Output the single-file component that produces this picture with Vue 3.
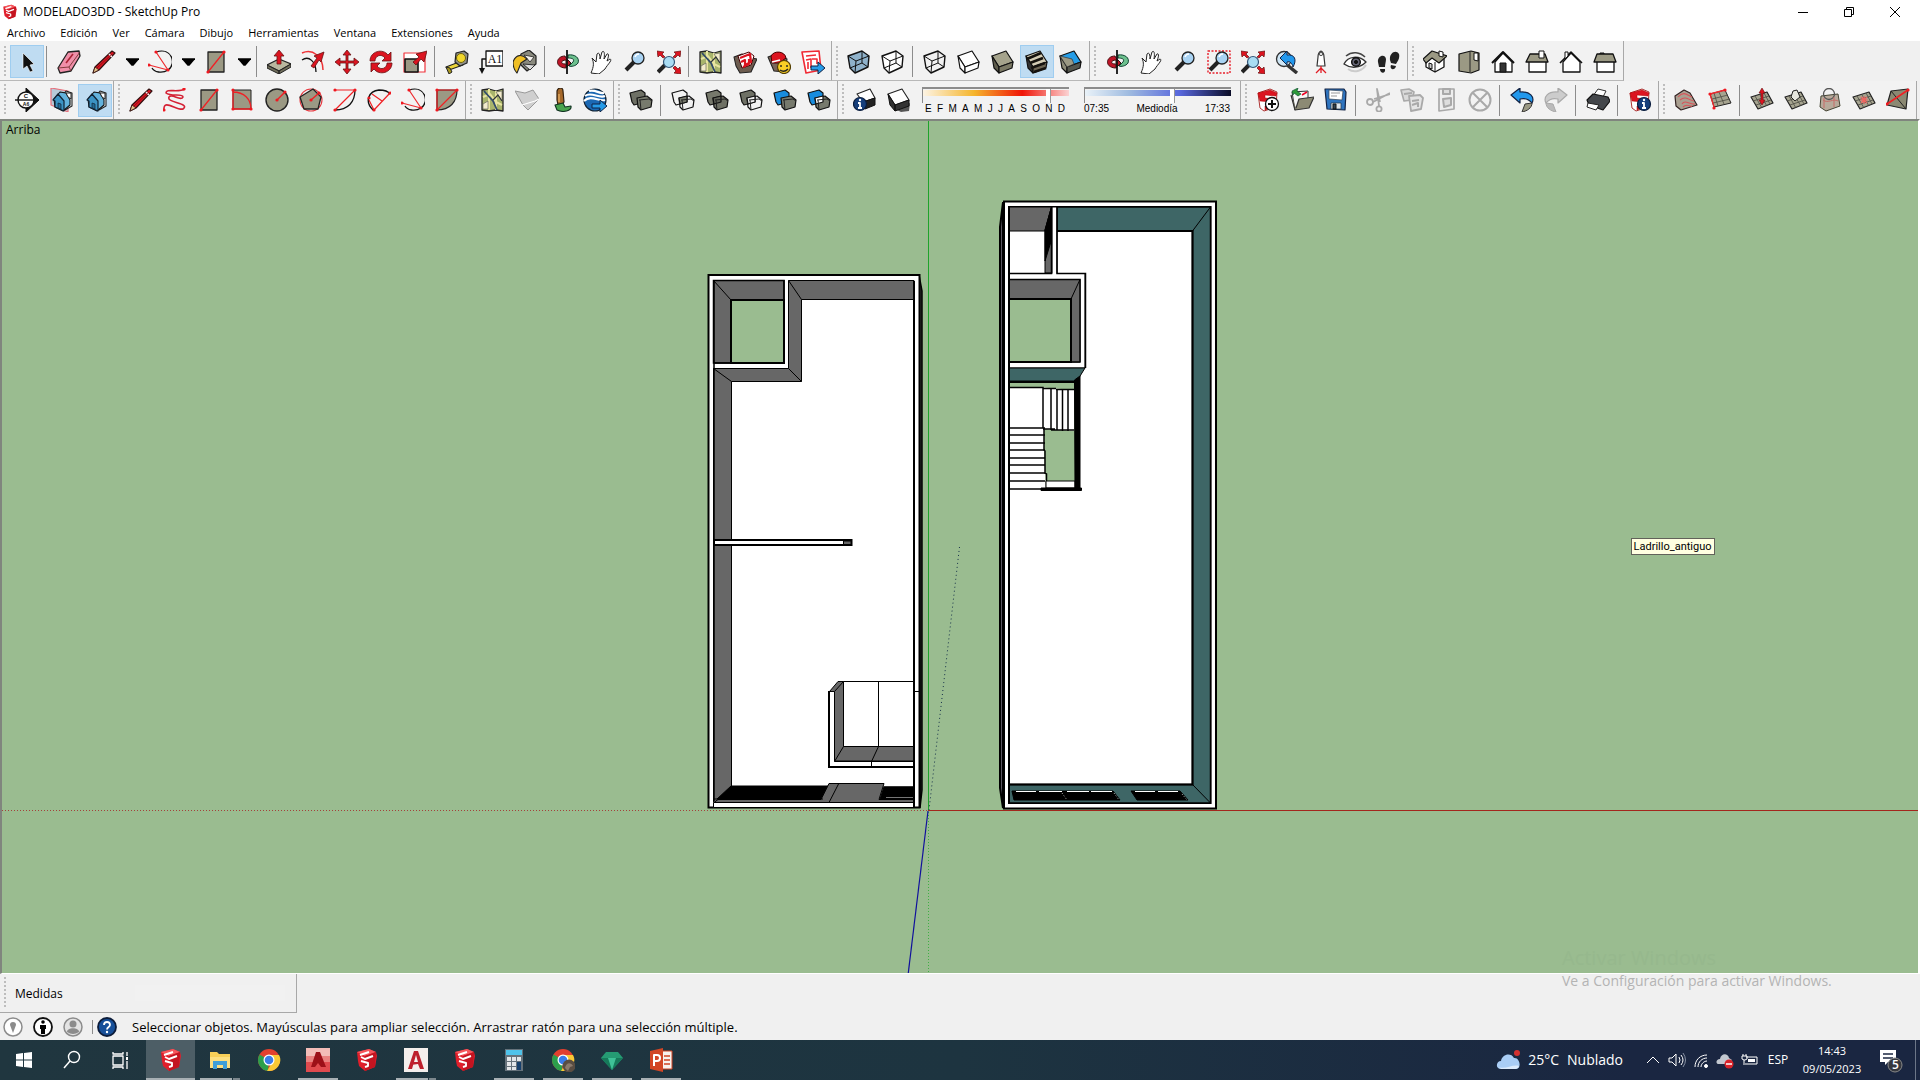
<script setup>
const p = (d, fill = 'none', stroke = '#111', w = 1) =>
  `<path d="${d}" fill="${fill}" stroke="${stroke}" stroke-width="${w}" stroke-linejoin="round"/>`
const c = (x, y, r, fill = 'none', stroke = '#111', w = 1) =>
  `<circle cx="${x}" cy="${y}" r="${r}" fill="${fill}" stroke="${stroke}" stroke-width="${w}"/>`
const dots = (...pts) => pts.map(([x, y]) => c(x, y, 1.6, '#f01820', 'none')).join('')

const RED = '#dc1420'
const STONE = '#9b9984'
const GREY = '#a9a9a9'

const cube = (face, side, low) =>
  p('M1 6L15 1L22 12L8 17Z', face, '#111', 1.2) + p('M1 6L8 17V23L3 18Z', low, '#111', 1.2) + p('M8 17L22 12L21 18L8 23Z', side, '#111', 1.2)
const wire = (fill) =>
  p('M1 6L15 1L22 6L21 17L8 23L3 18Z', fill, '#111', 1.4) + p('M1 6L9 11L22 6M9 11L8 23M3 18L15 13L21 17M15 13V1')
const lens = (x = 15, y = 8, r = 6) =>
  p(`M${x - r + 2} ${y + r - 2}L${x - r - 6} ${y + r + 6}`, 'none', '#222', 4) + c(x, y, r, '#a9d3f3', '#222', 1.3) + p(`M${x - 3} ${y - 1}Q${x - 2} ${y - 4} ${x + 1} ${y - 4}`, 'none', '#fff', 1.5)
const arrow4 = p('M12 0L16 5H13V11H19V8L24 12L19 16V13H13V19H16L12 24L8 19H11V13H5V16L0 12L5 8V11H11V5H8Z', RED, '#611', 0.8)
const corner = p('M0 1L7 2L5 4L8 7L6 8L3 5L1 7ZM24 1L17 2L19 4L16 7L18 8L21 5L23 7ZM24 24L17 23L19 21L16 18L18 16L21 19L23 17Z', RED, '#611', 0.7)
const mapBase = p('M1 2L8 1L15 3L22 1V23L15 22L8 23L1 22Z', '#a8b46c', '#222', 1.3) + p('M2 9L9 6L15 14L21 17M8 1V22M15 3V22', 'none', '#e8e4a0', 2) + p('M15 4L21 3V13ZM2 16L7 13V21H2Z', '#f3eccb', '#555', 0.6) + p('M3 3L12 13L16 22', 'none', '#31496a', 1.8) + p('M12 12L17 7L21 13', 'none', '#30353a', 1.2)
const suFile = p('M2 5L14 1L21 4L20 19L8 23L4 20Z', '#fff', '#900', 0.8) + p('M2 5L14 2L21 5L20 8L9 7V10L20 11L19 18L9 22V18L15 16V14L4 13Z', RED, '#a00', 0.5)
const boxes = (a, b, mid) => p('M1 5L12 2L16 5V14L5 17L3 14Z', a, '#111', 1.2) + p('M8 10L18 8L23 12L22 19L12 22L9 19Z', b, '#111', 1.2) + (mid ? p('M8 10L16 8V14L9 16Z', mid, '#111', 1.2) : '') + p('M10 12L20 11L23 13M12 22L11 12', 'none', '#222')
const info = (x, y) => c(x, y, 6.5, '#163f7c', '#0a1c3c', 1.2) + p(`M${x - 2} ${y - 1}H${x}V${y + 4}M${x - 2} ${y + 4}H${x + 2}`, 'none', '#fff', 1.8) + c(x, y - 4, 1.2, '#fff', 'none')
const house = p('M12 10L17 3L23 5V18L16 22Z', '#eef5f8', '#222', 1.1) + p('M5 11L11 4L17 5L21 12V17L14 23L6 19Z', '#63b2dc', '#111', 1.1) + p('M4 12L9 6L15 13V23L6 19V13Z', '#3b93c4', '#123', 1.2) + p('M9 15V20L12 21V16Z', '#236a94', '#123', 0.7) + p('M17 5H22V11L19 9Z', '#fff', '#222')
const terrain = (more) => p('M1 9L17 4L23 15L8 21Z', '#a6a490', '#222', 1.2) + p('M5 8L12 20M10 7L17 18M14 5L20 16M3 13L19 8M6 17L21 12', 'none', '#4b4b42', 0.8) + more
const globe = p('M10 6C1 6 -1 17 10 18C13 18 12 14 10 14C5 14 6 10 11 10V18L16 13L11 8Z', '#be1528', '#411', 1) + p('M13 5C20 4 25 8 23 13C21 16 16 17 14 16L18 12C20 9 17 8 13 8Z', '#6cc08d', '#143', 1) + p('M12 0V24', 'none', '#111', 1.8)

const icons = {
  select: p('M8 3V19L12 16L15 22L18 21L15 15L19 14Z', '#111', '#fff', 0.6),
  eraser: p('M1 18L11 2L22 1L23 6L14 21L3 23Z', '#f08fa9', '#222', 1.3) + p('M1 18L12 17L23 2M12 17L14 21', 'none', '#733', 0.9) + p('M9 13L16 4', 'none', '#a23', 1.6),
  pencil: p('M1 23L3 17L20 1L23 3L7 20Z', RED, '#311', 1.2) + p('M1 23L3 17L7 20Z', '#e6c48a', '#311', 0.8) + p('M17 4L20 7', 'none', '#eee', 1.5) + p('M5 18L20 4', 'none', '#7e0c14', 0.8),
  arc: p('M8 2C24 -3 29 14 20 20', 'none', '#111', 1.3) + p('M4 18C6 22 14 24 20 20', 'none', '#111', 1.3) + p('M8 2L20 20L1 15', 'none', '#ee2a2e', 1.2) + dots([8, 2], [20, 20], [1, 15]),
  rect: p('M4 2H20V22H4Z', STONE, '#222', 1.3) + p('M4 22L20 2', 'none', '#f02024', 1.3) + dots([4, 22], [20, 2]),
  push: p('M0 15L12 9L24 14L12 21Z', '#b9b79f', '#222', 1.2) + p('M0 15V18L12 24V21ZM24 14V17L12 24V21Z', '#6f6d5a', '#222') + p('M12 0L17 6H14V14H10V6H7Z', RED, '#611', 0.8),
  offset: p('M1 3C12 -2 22 7 22 20', 'none', '#ee3438', 1.5) + p('M1 10C8 5 15 12 15 22', 'none', '#111', 1.3) + p('M10 16L16 8L13 6L23 2L20 12L18 10L13 18Z', RED, '#611', 0.8),
  move: arrow4,
  rotate: p('M1 11C1 1 14 -2 19 5L22 2V11H13L16 8C12 3 6 6 6 11ZM23 13C23 23 10 26 5 19L2 22V13H11L8 16C12 21 18 18 18 13Z', RED, '#611', 0.8),
  scale: p('M1 3H22V22H1Z', '#fff', '#f0343c', 1.2) + p('M2 9H15V22H2Z', STONE, '#111', 1.6) + p('M10 12L16 7L13 4L24 1L21 12L18 9L13 15Z', RED, '#611', 0.8),
  tape: p('M1 17L14 12L18 15L4 20Z', '#ebd53a', '#222', 1.1) + p('M1 17L4 24L7 22L5 18Z', '#a99820', '#222') + p('M11 3L19 1L23 4L22 13L15 16L10 12Z', '#8f8f88', '#222', 1.2) + c(16, 8, 4.5, '#f2d72c', '#6f6410', 1),
  text: p('M7 1H24V16H7Z', '#fff', '#111', 1.3) + '<text x="16" y="13" font-size="12" font-family="Liberation Serif, serif" text-anchor="middle" fill="#111">A1</text>' + p('M7 9H3V20', 'none', '#111', 1.5) + p('M0 18H6L3 24Z', '#111', 'none'),
  paint: p('M8 4L16 0L23 6L23 14L14 21L6 13Z', '#8a8a7e', '#222', 1.2) + p('M11 5L21 7L17 12Z', '#f5f2ee', '#222', 0.8) + p('M0 12C3 4 9 4 14 9L8 13L4 23Q0 19 0 12Z', '#f0bf25', '#222', 1.1) + p('M10 14L17 20L22 15Z', '#ddd', '#222', 0.9),
  orbit: globe,
  pan: p('M2 23C5 16 5 13 3 8L7 12L8 4C10 2 11 4 11 9L13 2C15 0 16 3 15 9L18 4C20 3 20 6 18 11L21 9C24 10 18 15 16 19L10 24Z', '#fff', '#222', 1),
  zoom: lens(),
  extents: p('M9 14L1 22', 'none', '#222', 4) + corner + c(12, 12, 5.5, '#a9dcf3', '#357', 1.2),
  map: mapBase,
  warehouse: p('M1 7L9 4L14 7L24 9L18 22L7 23L3 16Z', '#6d5c4f', '#222', 1.1) + p('M5 6L16 2L21 6L18 15L9 18Z', '#fff', '#400', 1) + p('M7 8L17 4L18 12L12 15V10L8 12M10 17L16 14V9', 'none', RED, 2.2),
  extstore: p('M1 7L9 4L20 9L18 22L7 21Z', '#7a6558', '#222', 1.1) + p('M4 6C7 0 18 1 19 8L12 13L5 13Z', RED, '#400', 1) + p('M5 12L13 10', 'none', '#fff', 1.5) + c(17, 17, 6.5, '#f9cf26', '#523d00', 1.2) + p('M14 15V17M20 15V17M13 20Q17 23 21 19', 'none', '#222', 1.4),
  layout: p('M1 2L18 1L20 20L5 23Z', '#fff', '#f02a34', 1.6) + p('M5 6L15 5M5 10L10 9V18M11 9H16V14M7 12V19', 'none', '#f02a34', 1.6) + p('M10 16H17V12L24 18L17 24V20H10Z', '#259be8', '#124', 1),
  xray: wire('#8fb2cb'),
  backedges: wire('#fff'),
  wire: wire('none'),
  hidden: cube('#fff', '#fff', '#fff'),
  shaded: cube('#a5a38c', '#7b7965', '#5e5c4c'),
  textured: cube('#d4cdb5', '#6e6654', '#333') + p('M2 9L16 3M5 13L18 8M6 18L20 13M9 22L21 18', 'none', '#15120e', 2.6),
  mono: cube('#269de6', '#55574e', '#8b8976') + p('M1 6L13 9L15 14L8 17Z', '#9b9984', '#333', 0.7),
  zoomwin: p('M1 1H23V23H1Z', 'none', '#e8202c', 1.4).replace('/>', ' stroke-dasharray="2 1.5"/>') + lens(),
  previous: p('M11 14L22 23', 'none', '#333', 3.5) + c(9, 9, 7.5, '#cfe6f5', '#333', 1.3) + p('M5 8L12 1V5C20 4 22 10 18 17C17 13 15 11 12 12V15Z', '#2198ed', '#124', 1),
  camera: p('M9 7C9 4 10 2 12 1C14 2 15 4 15 7L16 16H8Z', '#fff', '#333', 1.2) + c(12, 4, 1.7, '#ddd', '#333', 0.8) + p('M12 16V23M12 18L7 23M12 18L17 23', 'none', '#e01c24', 1.3),
  look: p('M1 14C5 6 16 5 23 12C17 18 8 19 1 14Z', '#fff', '#333', 1.4) + c(13, 12, 4.3, '#667', '#111', 1.5) + c(13, 12, 1.6, '#111') + p('M3 6C9 1 17 2 22 7', 'none', '#444', 1.6) + p('M5 19C12 24 20 20 23 15', 'none', '#ccc', 2),
  walk: p('M1 12C0 6 8 3 9 9C9 12 8 14 8 17L2 17ZM3 19H8C9 24 3 24 3 19Z', '#222', 'none') + p('M13 10C12 3 19 -1 22 4C23 8 21 11 19 14L14 13ZM14 15L19 16C18 21 12 20 14 15Z', '#222', 'none'),
  iso: p('M3 10V17L12 22L21 17V8L12 5Z', '#fff', '#111', 1.3) + p('M0 9L9 1L24 6L16 13L9 8L3 13Z', STONE, '#111', 1.2) + p('M16 1V6L20 7V2Z', '#fff') + p('M12 12V22M6 13V18L9 19V14Z', '#ccc'),
  top: p('M2 4L14 1L22 3V20L14 23L2 21Z', STONE, '#111', 1.2) + p('M13 2V22', 'none', '#222', 1) + p('M17 3H21V11L17 10Z', '#fff'),
  front: p('M4 12V22H21V12L12 3Z', '#fff', '#111', 1.3) + p('M1 13L12 2L23 13', 'none', '#111', 2) + p('M9 13H15V22H9Z', '#333'),
  right: p('M4 11H21V22H4Z', '#fff', '#111', 1.3) + p('M5 4H20L23 12H1Z', STONE, '#111', 1.3) + p('M14 1H19V8H14Z', '#fff'),
  back: p('M4 12V22H21V12L12 3Z', '#fff', '#111', 1.3) + p('M1 13L12 2L23 13', 'none', '#111', 1.6) + p('M6 2H9V6L6 9Z', '#fff'),
  left: p('M4 11H21V22H4Z', '#fff', '#111', 1.3) + p('M4 4H20L23 12H1Z', STONE, '#111', 1.3) + p('M7 4V3H11V4', '#222'),
  section: p('M11 0L24 12L11 24Z', '#111', '#111', 1) + c(11, 12, 8, '#fff', '#111', 1.4) + p('M-1 12H24', 'none', '#111', 1.4) + '<text x="11" y="10" font-size="6" font-weight="bold" font-family="Liberation Sans, sans-serif" text-anchor="middle" fill="#111">C</text><text x="11" y="18" font-size="5" font-weight="bold" font-family="Liberation Sans, sans-serif" text-anchor="middle" fill="#111">A6</text>',
  sectionPlane: p('M2 0L19 3V24L2 17Z', '#b7cad8', '#e8707c', 1.2) + house,
  sectionCut: house,
  freehand: p('M1 22C0 10 14 23 20 21C28 15 3 15 6 9C9 5 18 14 20 9C20 5 8 9 3 5C3 0 15 5 22 1', 'none', '#d42034', 1.6) + dots([1, 22], [21, 1]),
  rotrect: p('M2 2H20V21H2Z', STONE, '#222', 1) + p('M2 2V21H20C20 11 13 4 2 4', 'none', '#f02024', 1.3) + dots([2, 2], [2, 21], [20, 21]),
  circle: c(12, 12, 11, STONE, '#222', 1.4) + p('M12 12L20 4', 'none', '#f02024', 1.4) + dots([12, 12], [20, 4]),
  polygon: c(12, 12, 11, 'none', '#e83a40', 1.1) + p('M1 9L14 1L22 9L19 21L5 21Z', STONE, '#222', 1.3) + p('M12 12L20 5', 'none', '#f02024', 1.4) + dots([12, 12], [20, 5]),
  arc2: p('M22 2C22 14 15 22 2 22', 'none', '#111', 1.3) + p('M2 2H22L2 22', 'none', '#f02024', 1.2) + dots([2, 2], [22, 2], [2, 22]),
  arc3: p('M6 22C-3 13 2 3 12 2C18 2 21 3 23 6', 'none', '#111', 1.4) + p('M2 12L7 22L23 5M5 6L15 13', 'none', '#f02024', 1.2) + dots([7, 22], [23, 5], [2, 10]),
  pie: p('M2 2H22C22 14 15 22 2 22Z', STONE, '#222', 1.2) + p('M2 2H22L2 22Z', 'none', '#f02024', 1.2) + dots([2, 2], [22, 2], [2, 22]),
  terrainOff: p('M0 3L10 5L18 2L24 11L13 22L8 17Z', '#cfcfcf', '#999', 1) + p('M7 17L20 13L24 11', 'none', '#fff', 1.2),
  pin: p('M8 3C9 -1 14 -1 14 3L15 14L13 17H9L8 12Z', '#a5682a', '#321', 1.2) + p('M10 6V14', 'none', '#e0a860', 1.5) + p('M6 17L14 15L16 19L22 18C23 23 14 25 8 22Z', '#49a44e', '#132', 1.1),
  earth: c(12, 12, 11, '#1b68b3', '#123', 1.2) + p('M2 8C8 3 16 11 22 8M1 13C8 6 16 14 22 12M6 3C12 1 16 6 21 5', 'none', '#fff', 2.2) + p('M9 16H17V12L24 18L17 24V20H9Z', '#259be8', '#124', 1),
  shell: boxes('#6e7065', '#777a6d'),
  intersect: boxes('none', 'none', '#777a6d'),
  union: boxes('#77796c', '#6f7165', '#5e6055'),
  subtract: boxes('#6e7065', 'none', '#eee'),
  trim: boxes('#188cdd', '#777a6d'),
  split: boxes('#188cdd', '#777a6d', '#fff'),
  shadowInfo: p('M4 6L17 1L22 10L10 14Z', '#fff', '#222', 1.1) + p('M10 14L22 10V17L12 21Z', '#222') + info(7, 16),
  shadow: p('M10 22L23 15L22 23L14 24Z', '#555', 'none') + p('M1 6L15 1L22 12L8 17Z', '#fff', '#222', 1.1) + p('M1 6L8 17V23L3 17ZM8 17L22 12V18L8 23Z', '#333', '#111', 1),
  newfile: suFile + c(16, 16, 6.5, '#fff', '#111', 1.3) + p('M12 16H20M16 12V20', 'none', '#111', 2),
  open: p('M2 4L18 3V12L5 22Z', '#f6f6f6', '#333') + p('M1 7L5 22L19 20L24 9L9 11L6 20', '#8c8a74', '#333', 1.2) + p('M2 3L8 0L7 3L11 6L8 8L4 5L3 7Z', '#2c9a38', '#153', 0.7) + p('M12 7L17 4', 'none', '#e02', 1.5),
  save: p('M1 1H20L22 4L21 22L3 21Z', '#2e74bf', '#124', 1.2) + p('M5 2L19 3L18 12L5 11Z', '#fff', '#345', 0.7) + p('M7 5H16M7 8H13', 'none', '#999') + p('M7 15H17V21H7Z', '#dfe5ea', '#234', 0.7) + p('M9 16H12V21H9Z', '#345'),
  cut: c(4, 14, 3, 'none', GREY, 1.8) + c(13, 21, 2.6, 'none', GREY, 1.8) + p('M7 14L24 5M13 18L11 1L14 14M8 11L24 6', 'none', GREY, 1.8),
  copy: p('M1 2L9 1L14 4L12 12L4 13Z', '#dadada', GREY, 1.6) + p('M9 8L20 7L23 10L21 21L11 23Z', '#e4e4e4', GREY, 1.8) + p('M4 6L12 5M12 13L19 12M12 17L18 15V19', 'none', GREY, 2),
  paste: p('M5 1H20V21L5 23Z', '#eee', GREY, 1.7) + p('M9 1H16V6H9ZM9 11L17 10V17L10 19Z', '#ddd', GREY, 2),
  del: c(12, 12, 10.5, 'none', GREY, 2) + p('M5 5L19 19M19 5L5 19', 'none', GREY, 2),
  undo: p('M1 7L10 0V4C20 3 25 9 22 15C18 10 14 10 10 11V15Z', '#2198ed', '#124', 1.2) + p('M22 15L15 16L12 24C17 23 22 20 22 15Z', STONE, '#333', 1),
  redo: p('M23 7L14 0V4C4 3 -1 9 2 15C6 10 10 10 14 11V15Z', '#ccc', GREY, 1.2) + p('M2 15L9 16L12 24C7 23 2 20 2 15Z', '#bbb', GREY, 1),
  print: p('M7 8L12 1L20 3L16 11Z', '#fff', '#333') + p('M1 12L7 6L22 9L24 13L17 22L3 17Z', '#44474b', '#111', 1.2) + p('M2 15L13 17L10 22L1 19Z', '#fff', '#222'),
  modelInfo: suFile + info(16, 16),
  contours: p('M1 8L10 2L16 5L23 17L7 22L2 18Z', '#a99f90', '#322', 1.2) + p('M4 9C10 2 14 8 18 9M6 12C12 7 16 13 20 13M8 16C11 11 16 17 21 16M9 19C13 15 16 19 18 18', 'none', '#d9545a', 1.1),
  scratch: p('M2 6L17 2L23 15L6 19Z', '#a6a490', '#222', 1) + p('M6 5L10 18M11 4L16 16M4 11L20 7M5 15L22 11', 'none', '#4b4b42', 0.8) + p('M17 2L2 6L6 19', 'none', '#f02a2e', 1.3) + dots([2, 6], [17, 2], [6, 20]),
  smoove: terrain(p('M12 0L15 5H13V12H15L12 17L9 12H11V5H9Z', RED, '#611', 0.6)),
  stamp: terrain(p('M7 9L9 3L13 2L16 9L11 13Z', '#e6e6de', '#222')),
  drape: p('M3 8L20 6L22 18L8 23L2 19Z', '#b8aa9b', '#443', 1) + c(11, 6, 5.5, 'none', '#555', 1.3) + p('M5 12C10 16 15 10 20 13M6 10V20M16 9V19', 'none', '#c66c68', 1),
  detail: terrain(p('M12 8V16M8 12H16M9 9L15 15M15 9L9 15', 'none', '#f06460', 1.2)),
  flip: p('M5 3L22 1L20 21L1 17Z', '#8b8973', '#222', 1.2) + p('M5 3L20 21', 'none', '#222') + p('M1 16L22 2', 'none', '#f02024', 1.6) + dots([1, 16], [22, 2]),
}

const b = (icon, label, extra = {}) => ({ icon, label, ...extra })
const sep = { sep: true }
const rows = [
  [
    [b('select', 'Seleccionar', { on: true }), sep, b('eraser', 'Borrar'), b('pencil', 'Línea', { more: true }), b('arc', 'Arco', { more: true }), b('rect', 'Rectángulo', { more: true }), sep,
      b('push', 'Empujar/tirar'), b('offset', 'Equidistancia'), b('move', 'Mover'), b('rotate', 'Rotar'), b('scale', 'Escala'), sep, b('tape', 'Medir'), b('text', 'Texto'), b('paint', 'Pintar'), sep,
      b('orbit', 'Orbitar'), b('pan', 'Desplazar'), b('zoom', 'Zoom'), b('extents', 'Ver modelo centrado'), sep, b('map', 'Añadir ubicación'), b('warehouse', '3D Warehouse'), b('extstore', 'Extension Warehouse'), b('layout', 'Enviar a LayOut')],
    [b('xray', 'Rayos X'), b('backedges', 'Aristas posteriores'), sep, b('wire', 'Alámbrico'), b('hidden', 'Líneas ocultas'), b('shaded', 'Sombreado'), b('textured', 'Sombreado con texturas', { on: true }), b('mono', 'Monocromo')],
    [b('orbit', 'Orbitar'), b('pan', 'Desplazar'), b('zoom', 'Zoom'), b('zoomwin', 'Ventana de zoom'), b('extents', 'Ver modelo centrado'), b('previous', 'Anterior'), b('camera', 'Situar cámara'), b('look', 'Girar'), b('walk', 'Caminar')],
    [b('iso', 'Isométrica'), b('top', 'Planta'), b('front', 'Frente'), b('right', 'Derecha'), b('back', 'Posterior'), b('left', 'Izquierda')],
  ],
  [
    [b('section', 'Plano de sección'), b('sectionPlane', 'Mostrar planos'), b('sectionCut', 'Mostrar cortes', { on: true })],
    [b('pencil', 'Línea'), b('freehand', 'Mano alzada'), b('rect', 'Rectángulo'), b('rotrect', 'Rectángulo girado'), b('circle', 'Círculo'), b('polygon', 'Polígono'), b('arc2', 'Arco 2 puntos'), b('arc3', 'Arco 3 puntos'), b('arc', 'Arco'), b('pie', 'Sector')],
    [b('map', 'Añadir ubicación'), b('terrainOff', 'Alternar terreno'), b('pin', 'Texturas fotográficas'), b('earth', 'Google Earth')],
    [b('shell', 'Carcasa'), sep, b('intersect', 'Intersección'), b('union', 'Unión'), b('subtract', 'Sustraer'), b('trim', 'Recortar'), b('split', 'Dividir')],
    [b('shadowInfo', 'Ajustes de sombra'), b('shadow', 'Sombras'), { sliders: true }],
    [b('newfile', 'Nuevo'), b('open', 'Abrir'), b('save', 'Guardar'), sep, b('cut', 'Cortar'), b('copy', 'Copiar'), b('paste', 'Pegar'), b('del', 'Eliminar'), sep, b('undo', 'Deshacer'), b('redo', 'Rehacer'), sep, b('print', 'Imprimir'), sep, b('modelInfo', 'Información del modelo')],
    [b('contours', 'Desde contornos'), b('scratch', 'Desde cero'), sep, b('smoove', 'Esculpir'), b('stamp', 'Estampar'), b('drape', 'Proyectar'), b('detail', 'Añadir detalle'), b('flip', 'Girar arista')],
  ],
]
const menus = ['Archivo', 'Edición', 'Ver', 'Cámara', 'Dibujo', 'Herramientas', 'Ventana', 'Extensiones', 'Ayuda']
const months = 'EFMAMJJASOND'.split('')

const suLogo = p('M2 4L14 1L21 4L22 8L20 19L10 23L4 18L3 13Z', '#e01f2b', 'none') + p('M2 4L14 1L21 4L10 8Z', '#f5575c', 'none') + p('M10 8L21 4L20 19L10 23Z', '#c41420', 'none') + p('M6 9L10 11L18 8M6 13L13 15V18L10 19M5 7L14 4', 'none', '#fff', 1.9)
const chrome = c(12, 12, 11, '#e2402f', 'none') + p('M12 12L2.500 6.500A11 11 0 0 0 11 23Z', '#2c9f4b', 'none') + p('M12 12H22A11 11 0 0 1 10 23L16 13ZM12 7H22A11 11 0 0 1 11 23L17 13Z', '#f9c935', 'none') + c(12, 12, 5.5, '#fff', 'none') + c(12, 12, 4.3, '#3b7de9', 'none')
const tasks = [
  { label: 'Inicio', art: p('M4 6L11 5V11.500H4ZM12 5L20 4V11.500H12ZM4 12.500H11V19L4 18ZM12 12.500H20V20L12 19Z', '#fff', 'none') },
  { label: 'Buscar', art: c(14, 9, 5.5, 'none', '#fff', 1.4) + p('M10 13L4 20', 'none', '#fff', 1.5) },
  { label: 'Vista de tareas', art: p('M5 8H15V17H5ZM5 4V6H15V4M5 21V19H15V21M19 4V8M19 13V21', 'none', '#fff', 1.3) + p('M18 9H20V12H18Z', '#fff', 'none') },
  { label: 'SketchUp', art: suLogo, active: true, run: true },
  { label: 'Explorador de archivos', art: p('M2 4H9L11 6H22V20H2Z', '#f7cf58', 'none') + p('M2 9H22V20H2Z', '#fcdf80', 'none') + p('M5 21V13H19V21H15V17H9V21Z', '#3f9fd8', 'none'), run: true, multi: true },
  { label: 'Chrome', art: chrome },
  { label: 'AutoCAD', art: p('M0 0H24V24H0Z', '#e04a4e', 'none') + p('M0 0H24V8H0Z', '#f3bdb8', 'none') + p('M0 8H24V14H0Z', '#ea8280', 'none') + p('M5 19L10 4H14L20 19H15L12 15L9 19Z', '#9c1018', 'none'), run: true },
  { label: 'SketchUp', art: suLogo },
  { label: 'AutoCAD', art: p('M0 0H24V24H0Z', '#f4eeec', 'none') + p('M4 21L10 3H14L20 21H16L14 16L7 17L8 14H14L12 7L8 21Z', '#bd1f2c', 'none'), run: true, multi: true },
  { label: 'SketchUp', art: suLogo },
  { label: 'Calculadora', art: p('M3 1H21V23H3Z', '#65727b', 'none') + p('M4 2H20V7H4Z', '#4fc3ea', 'none') + p('M5 9H9V13H5ZM10 9H14V13H10ZM15 9H19V13H15ZM5 14H9V18H5ZM10 14H14V18H10ZM5 19H9V22H5ZM10 19H14V22H10Z', '#e2e6e9', 'none') + p('M15 14H19V22H15Z', '#17406c', 'none'), run: true },
  { label: 'Chrome', art: chrome + c(18, 18, 6.5, '#5a4d42', 'none') + p('M14 20C15 14 20 14 22 18L19 19L17 23Z', '#8c7b6c', 'none'), run: true },
  { label: 'Filmora', art: p('M6 4H18L23 10L12 22L1 10Z', '#259b73', 'none') + p('M1 10H23L12 22Z', '#167a5a', 'none') + p('M8 10H16L12 22Z', '#3fc297', 'none'), run: true },
  { label: 'PowerPoint', art: p('M11 3H23V21H11Z', '#f7f2ef', '#d04424', 1) + p('M15 8H21M15 12H21M15 16H21', 'none', '#d04424', 1.6) + p('M1 3L14 0V24L1 21Z', '#d24625', 'none') + p('M5 18V7H8C12 7 12 13 8 13H5', 'none', '#fff', 2), run: true },
]

const stairTreads = [428, 435, 443, 450, 458, 465, 473, 481]
</script>

<template>
  <div class="app">
    <header class="titlebar">
      <svg class="logo" viewBox="0 0 24 24" v-html="suLogo"></svg>
      <h1>MODELADO3DD - SketchUp Pro</h1>
      <div class="winctl">
        <button type="button" aria-label="Minimizar"><svg viewBox="0 0 12 12"><path d="M1 6.500H11" /></svg></button>
        <button type="button" aria-label="Restaurar"><svg viewBox="0 0 12 12"><path d="M1.500 3.500H8.500V10.500H1.500ZM3.500 3V1.500H10.500V8.500H9" /></svg></button>
        <button type="button" aria-label="Cerrar"><svg viewBox="0 0 12 12"><path d="M1 1L11 11M11 1L1 11" /></svg></button>
      </div>
    </header>

    <nav class="menubar">
      <button v-for="m in menus" :key="m" type="button">{{ m }}</button>
    </nav>

    <div class="toolbars">
      <div v-for="(row, r) in rows" :key="r" class="toolrow">
        <div v-for="(bar, i) in row" :key="i" class="toolbar" role="toolbar">
          <span class="grip"></span>
          <template v-for="(t, j) in bar" :key="j">
            <span v-if="t.sep" class="sep"></span>
            <div v-else-if="t.sliders" class="sliders">
              <div class="slider">
                <input class="track month" type="range" min="0" max="100" value="87" aria-label="Fecha" />
                <div class="ticks"><span v-for="(m, k) in months" :key="k">{{ m }}</span></div>
              </div>
              <div class="slider">
                <input class="track hour" type="range" min="0" max="100" value="60" aria-label="Hora" />
                <div class="ticks"><span>07:35</span><span>Mediodía</span><span>17:33</span></div>
              </div>
            </div>
            <template v-else>
              <button type="button" class="tool" :class="{ on: t.on, split: t.more }" :aria-label="t.label">
                <svg viewBox="0 0 24 24" v-html="icons[t.icon]"></svg>
              </button>
              <button v-if="t.more" type="button" class="more" :aria-label="'Más: ' + t.label">
                <svg viewBox="0 0 14 8"><path d="M0 0H14V1L8 8H6L0 1Z" /></svg>
              </button>
            </template>
          </template>
        </div>
      </div>
    </div>

    <main class="viewport">
      <svg class="scene" viewBox="2 121 1916 852" preserveAspectRatio="xMidYMid slice" aria-label="Modelo en planta">
        <g fill="none">
          <path d="M928.500 100V810" stroke="#1fa32b" />
          <path d="M928.500 812V1000" stroke="#3fae43" stroke-dasharray="1 2" />
          <path d="M928 810.500H2400" stroke="#a3261c" />
          <path d="M-400 810.500H928" stroke="#a3413a" stroke-dasharray="1 2" />
          <path d="M928 811L905 1000" stroke="#10109c" stroke-width="1.200" />
          <path d="M959.500 547L929 810" stroke="#15304a" stroke-dasharray="1 3" />
        </g>

        <g stroke="#000" stroke-width="1" fill="#676767">
          <path d="M919 275L922 291V790L920 808Z" fill="#333" stroke-width="1.500" />
          <path d="M708.500 275H919.500V807.500H708.500Z" fill="#fff" stroke-width="2" />
          <path d="M713.500 280.500H784V363H713.500Z" stroke-width="1.500" />
          <path d="M731 300H784V363H731Z" fill="#9abc90" stroke-width="2" />
          <path d="M713.500 280.500L731 300" />
          <path d="M788.500 280.500H914V299.500H801.500V381.500H731.500V802H713.500V368.500H788.500Z" />
          <path d="M788.500 280.500L801.500 299.500M788.500 368.500L801.500 381.500M713.500 368.500L731.500 381.500" fill="none" />
          <path d="M714 281V802M784 280V363M713.500 363H784" fill="none" stroke-width="1.500" />
          <path d="M714 540H851.500V545H714Z" fill="#fff" stroke-width="2" />
          <path d="M843.500 541H851V544.500H843.500Z" />
          <path d="M731.500 786H914V802H713.500Z" stroke="none" />
          <path d="M731 786H829L821 799H717Z" fill="#000" />
          <path d="M884 787H914V799.500H880Z" fill="#000" />
          <path d="M886 797.500H913" stroke="#777" />
          <path d="M829 783.500H884L879 799.500H914V802.500H714L718 799.500H821Z" />
          <path d="M838.500 784L829 802.500M823 799H714" fill="none" />
          <path d="M713.500 802.500H914V807.500H713.500Z" fill="#fff" />
          <path d="M829.500 691.500L838 681.500H843.500V746.500H914V761H829.500Z" />
          <path d="M829 691.500H834.500V761.500H914V767H829Z" fill="#fff" stroke-width="1" />
          <path d="M829 691V767H914" fill="none" stroke-width="2" />
          <path d="M843.500 681.500H914V746.500H843.500Z" fill="#fff" />
          <path d="M878.500 681.500V746.500L871.500 761.500V767M834.500 761.500L843.500 746.500M834.500 691.500L843.500 681.500" fill="none" />
          <path d="M914 281V807" stroke-width="2" />
          <path d="M914 691.500H920" />
        </g>

        <g stroke="#000" stroke-width="1" fill="#3e6666">
          <path d="M1003 202L1000 227V788L1003 808Z" fill="#5a5560" stroke-width="2" />
          <path d="M1004 201.500H1216V808.500H1004Z" fill="#fff" stroke-width="2" />
          <path d="M1009 207H1210.500V803H1009Z" fill="#fff" stroke-width="2" />
          <path d="M1057 207H1210.500V803H1009V784.500H1192.500V231H1057Z" stroke-width="1.500" />
          <path d="M1192.500 231L1210.500 207M1192.500 784.500L1210.500 803" />
          <path d="M1057 231H1192.500V784.500H1009" fill="none" stroke-width="2" />
          <g fill="#676767">
            <path d="M1009 207H1051.500L1045 231H1009Z" />
            <path d="M1051.500 207V273H1045V230Z" />
            <path d="M1051.500 207V240L1045 261V230Z" fill="#000" />
          </g>
          <path d="M1052 207H1057V273.500H1085V368H1009V362H1080V279.500H1009V273.500H1052Z" fill="#fff" />
          <path d="M1057 207V273.500H1085.500V368M1009 273.500H1051.500V207" fill="none" stroke-width="1.500" />
          <path d="M1009 279.500H1080V362H1009Z" fill="#676767" stroke-width="1.500" />
          <path d="M1009 299H1071V362H1009Z" fill="#9abc90" stroke-width="2" />
          <path d="M1080 279.500L1071 299" />
          <path d="M1009 368H1085L1077 381H1009Z" />
          <path d="M1009 382H1077" stroke-width="2" />
          <path d="M1009 383H1075V489H1009Z" fill="#9abc90" stroke="none" />
          <path d="M1009 387.500H1043L1074 390V431L1044 429V450L1046 489H1009Z" fill="#fff" stroke="none" />
          <path d="M1009 387.500H1043V428M1043 388.500H1056M1051 388V430M1057 389V430M1056 389.500H1074M1062.500 390V431M1068 390V431M1043 429H1055M1051 430H1074M1044 428V450L1045 451V473L1046.500 474V489" fill="none" stroke-width="1.500" />
          <path v-for="y in stairTreads" :key="y" :d="`M1009 ${y}H1045`" stroke-width="1.500" />
          <path d="M1046 481H1075V488H1046Z" fill="#fff" />
          <path d="M1009 489H1046" stroke-width="1.500" />
          <path d="M1074.500 380L1080 376V488L1081.500 488V490.500H1041V488H1075Z" fill="#000" />
          <path d="M1012 791H1113L1120 800H1014Z" fill="#000" />
          <path d="M1131 791H1180L1188 800H1137Z" fill="#000" />
          <path d="M1016 791.500H1036M1039 791.500H1062M1067 791.500H1089M1091 791.500H1112M1135 791.500H1155M1158 791.500H1178" stroke="#fff" />
          <path d="M1062 793L1067 800M1114 793L1119 800M1182 794L1187 800" stroke="#bbb" stroke-dasharray="1 2" />
          <path d="M1009 207V803" stroke-width="2" />
        </g>
      </svg>
      <span class="viewname">Arriba</span>
      <span class="tooltip" role="tooltip">Ladrillo_antiguo</span>
    </main>

    <div class="measure">
      <div class="measurebox">
        <span class="grip"></span>
        <label for="medidas">Medidas</label>
        <input id="medidas" type="text" />
      </div>
      <div class="watermark">
        <strong>Activar Windows</strong>
        <span>Ve a Configuración para activar Windows.</span>
      </div>
    </div>

    <div class="status">
      <button type="button" aria-label="Geolocalización"><svg viewBox="0 0 20 20"><circle cx="10" cy="10" r="9" fill="#fff" stroke="#8c8c8c" stroke-width="1.500" /><path d="M10 16L7 8A3 3 0 1 1 13 8Z" fill="#8c8c8c" /></svg></button>
      <button type="button" aria-label="Créditos"><svg viewBox="0 0 20 20"><circle cx="10" cy="10" r="9" fill="#fff" stroke="#111" stroke-width="1.800" /><circle cx="10" cy="5" r="1.800" /><path d="M7 8H13V12H12V17H8V12H7Z" /></svg></button>
      <button type="button" aria-label="Iniciar sesión"><svg viewBox="0 0 20 20"><circle cx="10" cy="10" r="9" fill="#e4e4e4" stroke="#8c8c8c" stroke-width="1.500" /><circle cx="10" cy="7" r="3.500" fill="#8c8c8c" /><path d="M4 15C4 10 16 10 16 15Q10 19 4 15Z" fill="#8c8c8c" /></svg></button>
      <span class="bar"></span>
      <button type="button" aria-label="Ayuda"><svg viewBox="0 0 20 20"><circle cx="10" cy="10" r="9" fill="#17509a" stroke="#0c1c3a" stroke-width="1.800" /><path d="M7 8C7 4 13 4 13 8C13 10 10 10 10 12.500" fill="none" stroke="#fff" stroke-width="1.800" /><circle cx="10" cy="15" r="1.200" fill="#fff" /></svg></button>
      <p>Seleccionar objetos. Mayúsculas para ampliar selección. Arrastrar ratón para una selección múltiple.</p>
    </div>

    <footer class="taskbar">
      <button v-for="(t, i) in tasks" :key="i" type="button" class="task" :class="{ active: t.active, run: t.run, multi: t.multi }" :aria-label="t.label">
        <svg viewBox="0 0 24 24" v-html="t.art"></svg>
      </button>
      <div class="tray">
        <button type="button" class="weather">
          <svg viewBox="0 0 26 22"><path d="M5 20C-1 20 0 12 5 12C6 5 15 3 18 9C24 8 26 20 20 20Z" fill="#a9cdf5" /><path d="M3 18C8 21 17 15 23 17Q22 20 19 20H5Z" fill="#dcebfc" /><circle cx="21" cy="4" r="3" fill="#d3302f" /></svg>
          <span>25°C</span><span>Nublado</span>
        </button>
        <button type="button" aria-label="Mostrar iconos ocultos"><svg viewBox="0 0 18 18"><path d="M3 12L9 6L15 12" /></svg></button>
        <button type="button" aria-label="Volumen"><svg viewBox="0 0 18 18"><path d="M1 7H4L8 3V15L4 11H1ZM11 6Q13 9 11 12M13 4Q17 9 13 14" /><path d="M15 2Q20 9 15 16" stroke="#8791a3" /></svg></button>
        <button type="button" aria-label="Red"><svg viewBox="0 0 18 18"><path d="M3 16C3 9 8 4 15 4M6 16C6 11 10 7 15 7M9 16C9 13 12 10 15 10" /><circle cx="14" cy="15" r="1.500" fill="#fff" /></svg></button>
        <button type="button" aria-label="OneDrive"><svg viewBox="0 0 18 18"><path d="M3 13C-1 13 0 8 4 8C5 2 12 2 13 7L16 9L12 13Z" fill="#c3c8d0" stroke="none" /><circle cx="13" cy="13" r="4.500" fill="#d8232a" stroke="none" /><path d="M10 13H16" stroke-width="1.500" /></svg></button>
        <button type="button" aria-label="Batería"><svg viewBox="0 0 18 18"><path d="M6 6H17V13H5M3 3V5M6 3V5M2 5H7V8L5 9H4L2 8ZM4 9V14" /><path d="M8 8H15V11H8Z" fill="#fff" stroke="none" /></svg></button>
        <button type="button" class="lang">ESP</button>
        <button type="button" class="clock"><span>14:43</span><span>09/05/2023</span></button>
        <button type="button" class="notify" aria-label="Notificaciones">
          <svg viewBox="0 0 26 26"><path d="M2 3H18V15H10L7 18V15H2Z" fill="#fff" stroke="none" /><path d="M5 7H15M5 11H15" stroke="#1b2742" stroke-width="1.500" /><circle cx="17" cy="18" r="7" fill="#35383f" stroke="#888" /></svg>
          <span class="count">5</span>
        </button>
        <span class="desk"></span>
      </div>
    </footer>
  </div>
</template>

<style>
html,
body {
  margin: 0;
  background: #f0f0f0;
}
</style>

<style scoped>
.app {
  display: flex;
  flex-direction: column;
  min-height: 100vh;
  overflow: hidden;
  font: 12px/16px "Open Sans", "Noto Sans", sans-serif;
  color: #000;
  background: #f0f0f0;
}
button {
  display: flex;
  align-items: center;
  justify-content: center;
  flex: none;
  margin: 0;
  padding: 0;
  border: 0;
  background: none;
  font: inherit;
  color: inherit;
}
svg {
  display: block;
  flex: none;
}
.titlebar {
  display: flex;
  align-items: center;
  height: 23px;
  padding: 0 2px;
  background: #fff;
}
.logo {
  width: 16px;
  height: 16px;
}
h1 {
  margin: 0 auto 0 5px;
  font-size: 12px;
  font-weight: 400;
}
.winctl {
  display: flex;
}
.winctl button {
  width: 46px;
  height: 20px;
}
.winctl svg {
  width: 12px;
  height: 12px;
  fill: none;
  stroke: #000;
}
.menubar {
  display: flex;
  gap: 15px;
  box-sizing: border-box;
  height: 18px;
  padding: 2px 0 0 7px;
  font-size: 11px;
  background: #fff;
}
.toolbars {
  display: flex;
  flex-direction: column;
}
.toolrow {
  display: flex;
  height: 38px;
}
.toolrow:first-child {
  height: 40px;
}
.toolbar {
  display: flex;
  align-items: center;
  border-right: 1px solid #a8a8a8;
  border-bottom: 1px solid #b8b8b8;
  padding-right: 1px;
  background: #f2f2f2;
}
.toolrow:first-child .toolbar {
  padding-top: 2px;
}
.toolrow:last-child .toolbar {
  border-bottom: 0;
}
.grip {
  align-self: stretch;
  width: 2px;
  margin: 3px 4px;
  background: repeating-linear-gradient(#bdbdbd 0 2px, transparent 2px 4px);
}
.tool {
  width: 34px;
  height: 33px;
}
.tool.on {
  background: #bfdcf2;
  box-shadow: inset 0 0 0 1px #9fcdf0;
}
.tool.split {
  width: 36px;
}
.tool svg {
  width: 24px;
  height: 24px;
}
.more {
  width: 20px;
  height: 33px;
}
.more svg {
  width: 13px;
  height: 8px;
}
.sep {
  width: 1px;
  height: 31px;
  margin: 0 5px 0 2px;
  background: #8c8c8c;
}
.sliders {
  display: flex;
  gap: 16px;
  padding: 0 9px 0 6px;
}
.slider {
  width: 146px;
  font: 10px/11px "Liberation Sans", sans-serif;
}
.track {
  display: block;
  appearance: none;
  width: 100%;
  height: 14px;
  margin: 0;
  background: linear-gradient(90deg, #fdf4e4, #f5b52c 35%, #f01508 68%, #fbd3d3) no-repeat 0 1px / 100% 6px;
  border-top: 2px solid #8c8c8c;
  border-left: 1px solid #8c8c8c;
}
.track.hour {
  background-image: linear-gradient(90deg, #e9f2f8, #9fbbe0 30%, #5867dc 65%, #0b0d28);
}
.track::-webkit-slider-thumb {
  appearance: none;
  width: 5px;
  height: 14px;
  background: #fff;
  border-right: 1px solid #999;
}
.ticks {
  display: flex;
  justify-content: space-between;
  padding: 0 3px;
}
.hour + .ticks {
  padding: 0;
}
.viewport {
  position: relative;
  flex: 1;
  min-height: 320px;
  overflow: hidden;
  background: #9abc90;
  border: solid #fff;
  border-width: 2px 2px 1px;
  border-top-color: #80857e;
  border-left-color: #80857e;
}
.scene {
  position: absolute;
  inset: 0;
  width: 100%;
  height: 100%;
}
.viewname {
  position: absolute;
  left: 4px;
  top: 1px;
}
.tooltip {
  position: absolute;
  left: 85%;
  top: 417px;
  padding: 0 2px;
  border: 1px solid #62625a;
  background: #ffffe1;
  font: 11px/15px Roboto, sans-serif;
}
.measure {
  position: relative;
  display: flex;
  height: 39px;
}
.measurebox {
  display: flex;
  align-items: center;
  width: 296px;
  border-right: 1px solid #a8a8a8;
  border-bottom: 1px solid #a8a8a8;
  font-size: 12px;
}
.measurebox label {
  width: 120px;
  margin-left: 5px;
  padding-top: 2px;
}
.measurebox input {
  width: 150px;
  height: 16px;
  padding: 0;
  border: 0;
  background: #f1f1f1;
}
.watermark {
  position: absolute;
  right: 82px;
  top: -30px;
  width: 276px;
  color: #b4b4b4;
  font-size: 14px;
  line-height: 18px;
  white-space: nowrap;
  pointer-events: none;
}
.watermark strong {
  display: block;
  font-size: 20px;
  line-height: 28px;
  font-weight: 400;
  color: #96b88d;
}
.status {
  display: flex;
  align-items: center;
  gap: 10px;
  height: 27px;
  padding-left: 3px;
  font-size: 13px;
}
.status svg {
  width: 20px;
  height: 20px;
}
.status .bar {
  width: 1px;
  height: 14px;
  margin: 0 -6px 0 -1px;
  background: #8c8c8c;
}
.status p {
  margin: 0 0 0 5px;
}
.taskbar {
  display: flex;
  height: 40px;
  color: #fff;
  background: linear-gradient(90deg, #20363f, #1d3440 50%, #1a2641 85%);
}
.task {
  width: 49px;
}
.task:nth-child(-n + 3) {
  width: 48px;
}
.task:nth-child(3) {
  margin-right: 2px;
}
.task svg {
  width: 24px;
  height: 24px;
}
.task.active {
  background: #4d5e66;
}
.task.run {
  background-image: linear-gradient(#a8b0b4, #a8b0b4);
  background-size: 40px 2px;
  background-position: 50% 100%;
  background-repeat: no-repeat;
}
.task.run.active {
  background-size: 100% 2px;
}
.task.run.multi {
  background-image: linear-gradient(90deg, #a8b0b4 32px, transparent 32px 33px, #7c878d 33px);
}
.tray {
  display: flex;
  align-items: center;
  margin-left: auto;
  font-size: 12px;
}
.tray > button {
  width: 24px;
  height: 40px;
}
.tray svg {
  width: 18px;
  height: 18px;
  fill: none;
  stroke: #fff;
}
.tray .weather {
  width: auto;
  gap: 8px;
  margin-right: 18px;
  font-size: 14px;
}
.weather svg {
  width: 26px;
  height: 22px;
  margin-right: -2px;
  stroke: none;
}
.tray .lang {
  width: 34px;
}
.tray .clock {
  width: 74px;
  flex-direction: column;
  font-size: 11px;
  line-height: 18px;
}
.tray .notify {
  position: relative;
  width: 40px;
}
.notify svg {
  width: 26px;
  height: 26px;
  margin-left: 4px;
}
.count {
  position: absolute;
  left: 23px;
  top: 17px;
  font-size: 12px;
  font-weight: 600;
}
.desk {
  width: 4px;
  height: 40px;
  margin-left: 6px;
  border-left: 1px solid #6c7688;
}
</style>
